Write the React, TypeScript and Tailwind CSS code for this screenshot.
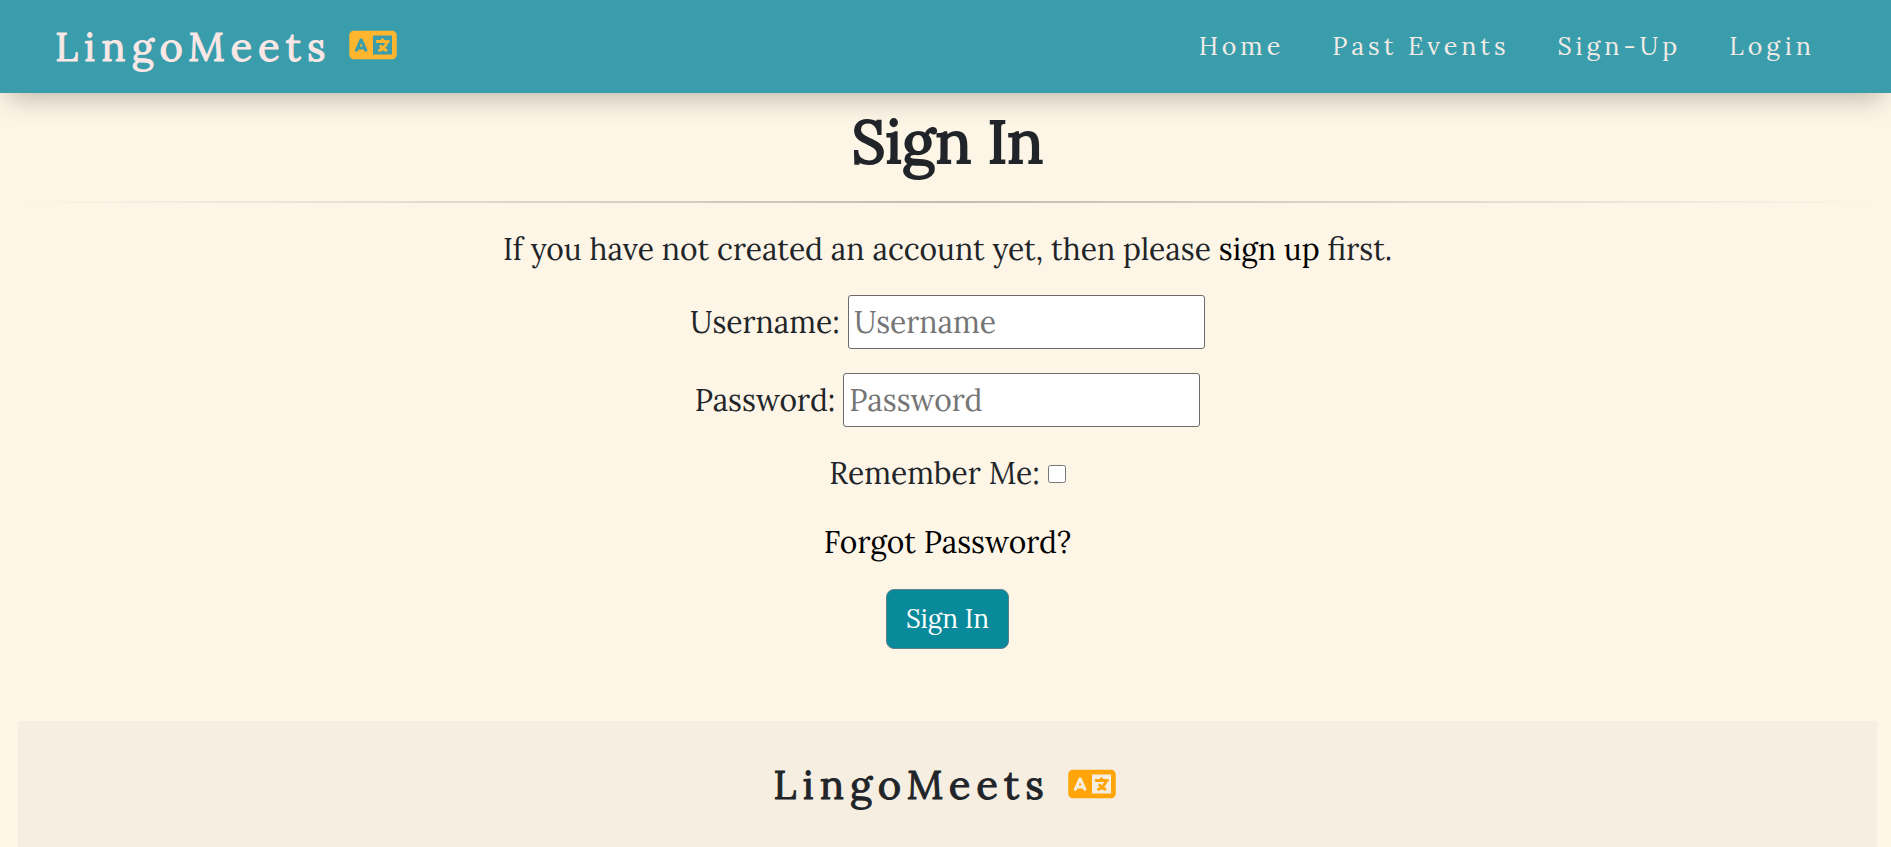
import { FaLanguage } from "react-icons/fa6";

const links = ["Home", "Past Events", "Sign-Up", "Login"];

const inputClass =
  "h-[54px] w-[357px] rounded-[3px] border border-[#6b6b6b] bg-white px-[5px] text-[30px] placeholder:text-[#757575]";

const brandClass =
  "flex items-center gap-[18px] text-[40px] leading-[60px] tracking-[6px] [-webkit-text-stroke:1px]";

export default function App() {
  return (
    <div className="min-h-screen overflow-hidden bg-[#fdf5e6] font-['Lora','Liberation_Serif',serif] text-[#212529]">
      <header className="flex h-[93px] items-center justify-between bg-[#3a9dab] pr-[76px] pl-[55px] shadow-[0_12px_28px_-8px_rgba(0,0,0,0.28)]">
        <a href="#" className={`${brandClass} text-[#fbe8e6]`}>
          LingoMeets
          <FaLanguage className="mb-[3px] h-[38px] w-[48px] text-[#ffb52e]" aria-hidden="true" />
        </a>
        <nav className="flex gap-12 pb-[2px]">
          {links.map((link) => (
            <a key={link} href="#" className="text-[25px] leading-8 tracking-[4px] text-[#f3ebe6]">
              {link}
            </a>
          ))}
        </nav>
      </header>

      <main className="pr-[14px] pl-[18px]">
        <h1 className="pt-[12px] text-center text-[60px] leading-[72px] [-webkit-text-stroke:2px]">Sign In</h1>
        <hr className="mt-[24px] h-[2px] border-0 bg-linear-to-r from-transparent via-[#c2bbaf] to-transparent" />
        <p className="mt-6 text-center text-[30px] leading-[45px]">
          If you have not created an account yet, then please{" "}
          <a href="#" className="text-black">
            sign up
          </a>{" "}
          first.
        </p>

        <form className="flex flex-col items-center text-[30px] leading-[45px]">
          <div className="mt-[23px] flex items-center gap-2">
            <label htmlFor="username">Username:</label>
            <input id="username" type="text" placeholder="Username" className={inputClass} />
          </div>
          <div className="mt-6 flex items-center gap-2">
            <label htmlFor="password">Password:</label>
            <input id="password" type="password" placeholder="Password" className={inputClass} />
          </div>
          <div className="mt-6 flex items-center gap-2">
            <label htmlFor="remember">Remember Me:</label>
            <input id="remember" type="checkbox" className="size-[18px]" />
          </div>
          <a href="#" className="mt-6 text-black">
            Forgot Password?
          </a>
          <button
            type="button"
            className="mt-6 h-[60px] rounded-lg border border-[#5c7f88] bg-[#088a9b] px-[19px] text-[26px] leading-9 text-white"
          >
            Sign In
          </button>
        </form>

        <footer className="mt-[72px] flex h-[160px] justify-center bg-[#f6eee1] pt-[34px] pr-[6px]">
          <div className={`${brandClass} h-[60px]`}>
            LingoMeets
            <FaLanguage className="mb-[3px] h-[38px] w-[48px] text-[#ffa50a]" aria-hidden="true" />
          </div>
        </footer>
      </main>
    </div>
  );
}
